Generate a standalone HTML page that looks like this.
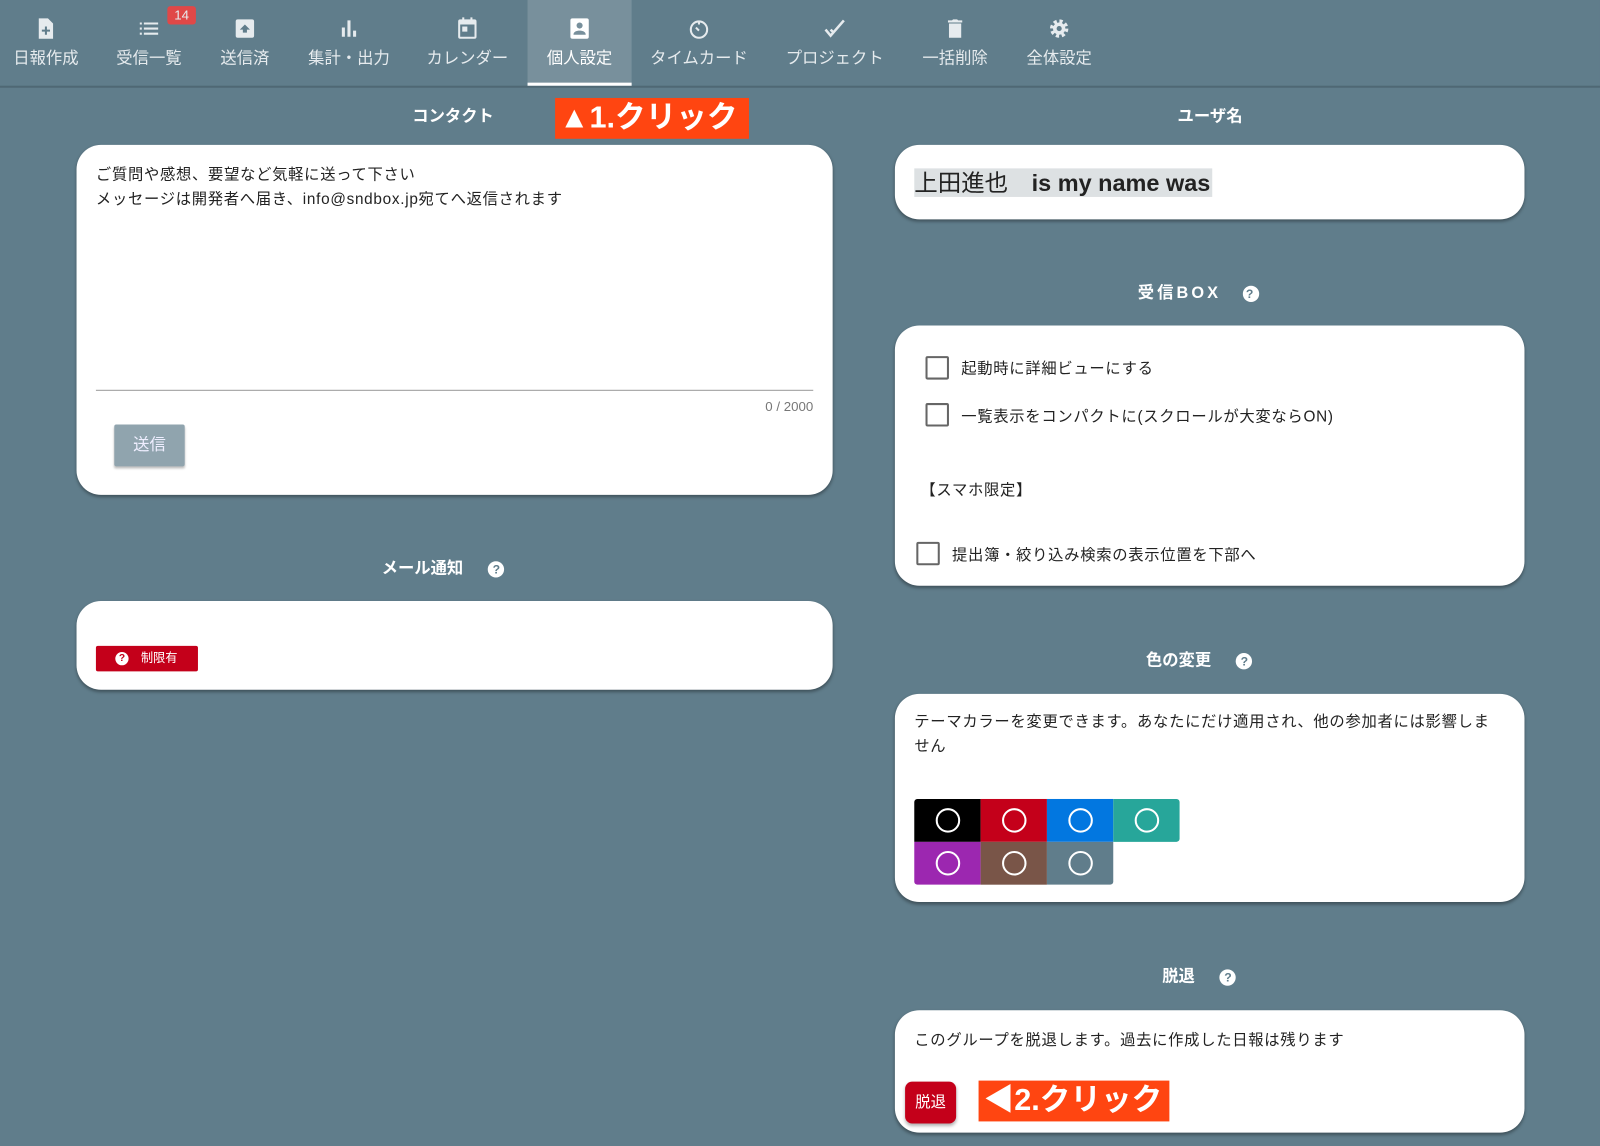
<!DOCTYPE html>
<html><head><meta charset="utf-8"><style>
html,body{margin:0;padding:0;background:#607d8b;width:1600px;height:1146px;overflow:hidden}
#w{position:absolute;left:0;top:0;width:1568px;height:1123px;transform:scale(1.0204);transform-origin:0 0;font-family:"Liberation Sans","Noto Sans CJK JP",sans-serif}
.a{position:absolute}
.nav{position:absolute;top:0;left:0;width:1568px;height:84px;background:#607d8b;border-bottom:2px solid #4f6874}
.tab{position:absolute;top:0;height:84px;text-align:center;color:#e6ebee;font-size:16px}
.tab .ic{position:absolute;top:16px;left:0;right:0;height:24px}
.tab .lb{position:absolute;top:43px;left:0;right:0}
.card{position:absolute;background:#fff;border-radius:24px;box-shadow:0 2px 3px rgba(0,0,0,.35)}
.h{position:absolute;color:#fff;font-weight:bold;font-size:16px}
.q{display:inline-block;width:16px;height:16px;border-radius:50%;background:#fff;color:#607d8b;font-size:12px;font-weight:bold;text-align:center;line-height:16px;vertical-align:middle}
.cb{position:absolute;width:19px;height:19px;border:2px solid #666;border-radius:2px}
.t{position:absolute;font-size:15px;color:#222;letter-spacing:.7px}
.sw{position:absolute;width:65px;height:42px}
.sw i{position:absolute;left:21px;top:9px;width:20px;height:20px;border:2px solid #fff;border-radius:50%}
.red{position:absolute;background:#ff4511;color:#fff;font-weight:bold;font-size:30px;line-height:40px;height:40px;white-space:nowrap;overflow:hidden}
</style></head><body><div id="w">
<div class="nav">
<div class="tab" style="left:0;width:90px"><svg class="ic" viewBox="0 0 24 24" width="24" height="24" style="left:33px"><path fill="#e6ebee" d="M5 2h9l5 5v15H5z"/><path fill="#607d8b" d="M11 10h2v3h3v2h-3v3h-2v-3H8v-2h3z"/></svg><div class="lb">日報作成</div></div>
<div class="tab" style="left:100px;width:92px"><svg class="ic" viewBox="0 0 24 24" width="24" height="24" style="left:34px"><path fill="#e6ebee" d="M3 6h2v2H3zm4 0h14v2H7zM3 11h2v2H3zm4 0h14v2H7zM3 16h2v2H3zm4 0h14v2H7z"/></svg><div class="lb">受信一覧</div>
<div class="a" style="left:64px;top:6px;width:28px;height:18px;background:#e04848;border-radius:3px;font-size:13px;line-height:18px">14</div></div>
<div class="tab" style="left:200px;width:80px"><svg class="ic" viewBox="0 0 24 24" width="24" height="24" style="left:28px"><rect x="3" y="3" width="18" height="18" rx="2" fill="#e6ebee"/><path fill="#607d8b" d="M12 8l5 5h-3v3h-4v-3H7z"/></svg><div class="lb">送信済</div></div>
<div class="tab" style="left:292px;width:100px"><svg class="ic" viewBox="0 0 24 24" width="24" height="24" style="left:38px"><path fill="#e6ebee" d="M5 11h3v9H5zm5.5-7h3v16h-3zM16 14h3v6h-3z"/></svg><div class="lb">集計・出力</div></div>
<div class="tab" style="left:410px;width:96px"><svg class="ic" viewBox="0 0 24 24" width="24" height="24" style="left:36px"><path fill="#e6ebee" d="M7 1h2v2h6V1h2v2h2a2 2 0 012 2v15a2 2 0 01-2 2H5a2 2 0 01-2-2V5a2 2 0 012-2h2zM5 8v12h14V8z"/><rect x="7" y="10" width="5" height="5" fill="#e6ebee"/></svg><div class="lb">カレンダー</div></div>
<div class="tab" style="left:517px;width:102px;background:#78909c;border-bottom:3px solid #fff;height:81px"><svg class="ic" viewBox="0 0 24 24" width="24" height="24" style="left:39px"><rect x="3" y="2" width="18" height="20" rx="2" fill="#fff"/><circle cx="12" cy="9" r="3" fill="#78909c"/><path fill="#78909c" d="M6 18c0-3 3-4 6-4s6 1 6 4z"/></svg><div class="lb" style="color:#fff">個人設定</div></div>
<div class="tab" style="left:632px;width:106px"><svg class="ic" viewBox="0 0 24 24" width="24" height="24" style="left:41px"><circle cx="12" cy="13" r="8" fill="none" stroke="#e6ebee" stroke-width="2"/><path d="M12 5v3M9 11l3 3" stroke="#e6ebee" stroke-width="2" fill="none"/></svg><div class="lb">タイムカード</div></div>
<div class="tab" style="left:762px;width:112px"><svg class="ic" viewBox="0 0 24 24" width="24" height="24" style="left:44px"><path d="M3 13l5 6L21 4M8 13l3 3" stroke="#e6ebee" stroke-width="2.5" fill="none"/></svg><div class="lb">プロジェクト</div></div>
<div class="tab" style="left:896px;width:80px"><svg class="ic" viewBox="0 0 24 24" width="24" height="24" style="left:28px"><path fill="#e6ebee" d="M6 7h12v14H6zM5 4h4l1-1h4l1 1h4v2H5z"/></svg><div class="lb">一括削除</div></div>
<div class="tab" style="left:998px;width:80px"><svg class="ic" viewBox="0 0 24 24" width="24" height="24" style="left:28px"><circle cx="12" cy="12" r="7" fill="none" stroke="#e6ebee" stroke-width="4" stroke-dasharray="3 2.5"/><circle cx="12" cy="12" r="6" fill="#e6ebee"/><circle cx="12" cy="12" r="2.5" fill="#607d8b"/></svg><div class="lb">全体設定</div></div>
</div>

<div class="h" style="left:404px;top:100px">コンタクト</div>
<div class="red" style="left:544px;top:96px;width:186px;padding-left:4px">▲1.クリック</div>
<div class="card" style="left:75px;top:142px;width:741px;height:343px">
<div class="t" style="left:19px;top:18px;line-height:24px">ご質問や感想、要望など気軽に送って下さい<br>メッセージは開発者へ届き、info@sndbox.jp宛てへ返信されます</div>
<div class="a" style="left:19px;top:240px;width:703px;height:1px;background:#999"></div>
<div class="a" style="right:19px;top:249px;font-size:13px;color:#777">0 / 2000</div>
<div class="a" style="left:37px;top:274px;width:69px;height:41px;background:#90a4ae;color:#eef;font-size:16px;text-align:center;line-height:41px;border-radius:2px;box-shadow:0 2px 2px rgba(0,0,0,.25)">送信</div>
</div>

<div class="h" style="left:374px;top:543px">メール通知 <span class="q" style="margin-left:20px">?</span></div>
<div class="card" style="left:75px;top:589px;width:741px;height:87px">
<div class="a" style="left:19px;top:44px;width:100px;height:25px;background:#c4001a;border-radius:2px;color:#fff;font-size:12px;line-height:25px"><span class="q" style="width:13px;height:13px;line-height:13px;font-size:10px;color:#c4001a;margin:0 12px 0 19px">?</span>制限有</div>
</div>

<div class="h" style="left:1154px;top:100px">ユーザ名</div>
<div class="card" style="left:877px;top:142px;width:617px;height:73px">
<div class="a" style="left:19px;top:23px;height:28px;background:#dde1e3;font-size:23px;line-height:28px;color:#222;padding-right:2px">上田進也　<b style="font-weight:600">is my name was</b></div>
</div>

<div class="h" style="left:1115px;top:273px;letter-spacing:3px">受信BOX <span class="q" style="margin-left:14px">?</span></div>
<div class="card" style="left:877px;top:319px;width:617px;height:255px">
<div class="cb" style="left:30px;top:30px"></div><div class="t" style="left:65px;top:31px">起動時に詳細ビューにする</div>
<div class="cb" style="left:30px;top:76px"></div><div class="t" style="left:65px;top:78px">一覧表示をコンパクトに(スクロールが大変ならON)</div>
<div class="t" style="left:25px;top:150px">【スマホ限定】</div>
<div class="cb" style="left:21px;top:212px"></div><div class="t" style="left:56px;top:214px">提出簿・絞り込み検索の表示位置を下部へ</div>
</div>

<div class="h" style="left:1123px;top:633px">色の変更 <span class="q" style="margin-left:20px">?</span></div>
<div class="card" style="left:877px;top:680px;width:617px;height:204px">
<div class="t" style="left:19px;top:16px;line-height:24px;width:566px">テーマカラーを変更できます。あなたにだけ適用され、他の参加者には影響しません</div>
<div class="sw" style="left:19px;top:103px;background:#000;border-radius:3px 0 0 0"><i></i></div>
<div class="sw" style="left:84px;top:103px;background:#c4001a"><i></i></div>
<div class="sw" style="left:149px;top:103px;background:#0277e0"><i></i></div>
<div class="sw" style="left:214px;top:103px;background:#27a69a;border-radius:0 3px 3px 0"><i></i></div>
<div class="sw" style="left:19px;top:145px;background:#9c27b0;border-radius:0 0 0 3px"><i></i></div>
<div class="sw" style="left:84px;top:145px;background:#795548"><i></i></div>
<div class="sw" style="left:149px;top:145px;background:#607d8b;border-radius:0 0 3px 0"><i></i></div>
</div>

<div class="h" style="left:1139px;top:943px">脱退 <span class="q" style="margin-left:20px">?</span></div>
<div class="card" style="left:877px;top:990px;width:617px;height:120px">
<div class="t" style="left:19px;top:18px">このグループを脱退します。過去に作成した日報は残ります</div>
<div class="a" style="left:10px;top:70px;width:50px;height:41px;background:#c4001a;border-radius:7px;color:#fff;font-size:15px;text-align:center;line-height:41px;box-shadow:0 2px 3px rgba(0,0,0,.3)">脱退</div>
<div class="red" style="left:82px;top:69px;width:182px;padding-left:5px">◀2.クリック</div>
</div>
</div></body></html>
